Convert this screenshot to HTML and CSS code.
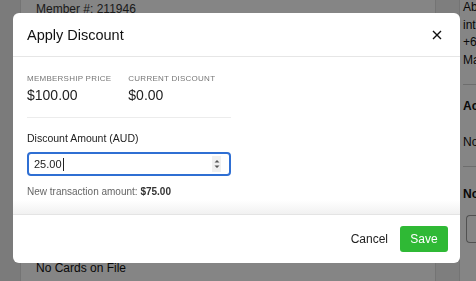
FILE: index.html
```html
<!DOCTYPE html>
<html lang="en">
<head>
    <meta charset="UTF-8"/>
    <meta name="viewport" content="width=device-width, initial-scale=1"/>
    <title>Apply Discount</title>
    <link rel="stylesheet" href="styles.css">
</head>
<body>

<!-- Page behind the modal -->
<div class="page">
    <div class="sidebar"></div>
    <div class="main-card">
        <p class="member-no">Member #: 211946</p>
        <div class="spacer"></div>
        <p class="no-cards">No Cards on File</p>
    </div>
    <div class="right-col">
        <p class="line first">Ab</p>
        <p class="line">int</p>
        <p class="line">+6</p>
        <p class="line">Ma</p>
        <div class="right-section">
            <p class="heading">Ac</p>
            <p class="line">No</p>
        </div>
        <div class="right-section second">
            <p class="heading">No</p>
            <div class="ghost-btn"></div>
        </div>
    </div>
</div>

<!-- Modal -->
<div class="overlay">
    <div class="modal">
        <div class="modal-header">
            <h2>Apply Discount</h2>
            <button class="close-btn" aria-label="Close">
                <svg width="10" height="10" viewBox="0 0 10 10">
                    <path d="M1 1 L9 9 M9 1 L1 9" stroke="#111" stroke-width="1.4" fill="none"/>
                </svg>
            </button>
        </div>
        <div class="modal-body">
            <div class="summary">
                <div class="stat">
                    <div class="stat-label">Membership Price</div>
                    <div class="stat-value">$100.00</div>
                </div>
                <div class="stat">
                    <div class="stat-label">Current Discount</div>
                    <div class="stat-value">$0.00</div>
                </div>
            </div>
            <label class="field-label">Discount Amount (AUD)</label>
            <div class="amount-input">
                <span class="amount-text">25.00</span><span class="caret"></span>
                <span class="spinner">
                    <svg width="8" height="12" viewBox="0 0 8 12">
                        <path d="M1.5 4.5 L4 2 L6.5 4.5 Z M1.5 7.5 L4 10 L6.5 7.5 Z" fill="#555"/>
                    </svg>
                </span>
            </div>
            <p class="hint">New transaction amount: <strong>$75.00</strong></p>
        </div>
        <div class="modal-footer">
            <button class="btn-cancel">Cancel</button>
            <button class="btn-save">Save</button>
        </div>
    </div>
</div>

</body>
</html>
```

FILE: styles.css
```css
body {
    margin: 0;
    font-family: "Liberation Sans", Arial, sans-serif;
    overflow: hidden;
    background-color: #eeeeee;
    color: #222;
}

p {
    margin: 0;
}

/* Page behind */
.page {
    display: flex;
    height: 281px;
}

.sidebar {
    flex: 0 0 20px;
    background-color: #e8e8e8;
    border-right: 1px solid #dcdcdc;
}

.main-card {
    flex: 0 0 415px;
    background-color: #fbfbfb;
    border-right: 1px solid #dcdcdc;
    display: flex;
    flex-direction: column;
    padding: 0 0 0 15px;
    box-sizing: border-box;
}

.member-no {
    font-size: 12px;
    margin-top: 2px;
    color: #333;
}

.spacer {
    flex: 1;
}

.no-cards {
    font-size: 12px;
    margin-bottom: 6px;
    color: #111;
}

.right-col {
    margin-left: 23px;
    flex: 1;
    min-width: 0;
    overflow: hidden;
    background-color: #fbfbfb;
    border-left: 1px solid #dcdcdc;
    padding-left: 3px;
    font-size: 12px;
    color: #111;
}

.right-col .line {
    line-height: 17.5px;
}

.right-col .first {
    margin-top: -1px;
}

.right-section {
    border-top: 1px solid #cfcfcf;
    margin-top: 15px;
    padding-top: 13px;
}

.right-section .heading {
    font-weight: bold;
    line-height: 17.5px;
    margin-bottom: 18px;
}

.right-section.second {
    padding-top: 19px;
}

.right-section.second .heading {
    margin-bottom: 11px;
}

.ghost-btn {
    height: 26px;
    margin-left: 3px;
    border: 1px solid #999;
    border-right: none;
    border-radius: 4px 0 0 4px;
}

/* Overlay + modal */
.overlay {
    position: fixed;
    top: 0;
    left: 0;
    width: 100%;
    height: 100%;
    background-color: rgba(0, 0, 0, 0.47);
    padding: 13px;
    box-sizing: border-box;
}

.modal {
    width: 447px;
    height: 250px;
    background-color: #fff;
    border-radius: 6px;
    display: flex;
    flex-direction: column;
    overflow: hidden;
}

.modal-header {
    height: 44px;
    box-sizing: border-box;
    padding: 0 14px;
    border-bottom: 1px solid #e6e6e6;
    display: flex;
    align-items: center;
    justify-content: space-between;
}

.modal-header h2 {
    margin: 0;
    font-size: 14.5px;
    font-weight: normal;
    color: #111;
}

.close-btn {
    background: none;
    border: none;
    padding: 0;
    margin-right: 4px;
    width: 10px;
    height: 10px;
    display: flex;
    cursor: pointer;
}

.modal-body {
    flex: 1;
    position: relative;
    padding: 14px 14px 0;
}

.modal-body::after {
    content: "";
    position: absolute;
    left: 0;
    right: 0;
    bottom: 0;
    height: 14px;
    background: linear-gradient(to bottom, rgba(240, 240, 240, 0), #f1f1f1);
}

.summary {
    width: 204px;
    display: flex;
    gap: 17px;
    padding-bottom: 14px;
    border-bottom: 1px solid #ececec;
}

.stat-label {
    font-size: 8px;
    text-transform: uppercase;
    letter-spacing: 0.25px;
    color: #777;
    margin-top: 3px;
}

.stat-value {
    font-size: 14px;
    margin-top: 4px;
    color: #222;
}

.field-label {
    display: block;
    font-size: 10.5px;
    margin-top: 14px;
    color: #222;
}

.amount-input {
    width: 204px;
    height: 24px;
    margin-top: 8px;
    box-sizing: border-box;
    border: 2px solid #2f6fd3;
    border-radius: 4px;
    display: flex;
    align-items: center;
    padding: 0 8px 0 5px;
    font-size: 11px;
    color: #222;
}

.caret {
    width: 1px;
    height: 13px;
    background-color: #222;
    margin-left: 1px;
}

.spinner {
    margin-left: auto;
    width: 9px;
    height: 16px;
    background-color: #f0f0f0;
    display: flex;
    align-items: center;
    justify-content: center;
}

.hint {
    font-size: 10px;
    color: #666;
    margin-top: 10px;
}

.hint strong {
    color: #333;
}

.modal-footer {
    height: 49px;
    box-sizing: border-box;
    border-top: 1px solid #e4e4e4;
    display: flex;
    align-items: center;
    justify-content: flex-end;
    gap: 12px;
    padding-right: 12px;
}

.btn-cancel {
    background: none;
    border: none;
    font-family: inherit;
    font-size: 12px;
    color: #222;
    padding: 0;
    cursor: pointer;
}

.btn-save {
    background-color: #2fb935;
    color: #fff;
    border: none;
    border-radius: 3px;
    width: 48px;
    height: 26px;
    font-family: inherit;
    font-size: 12px;
    cursor: pointer;
}
```
